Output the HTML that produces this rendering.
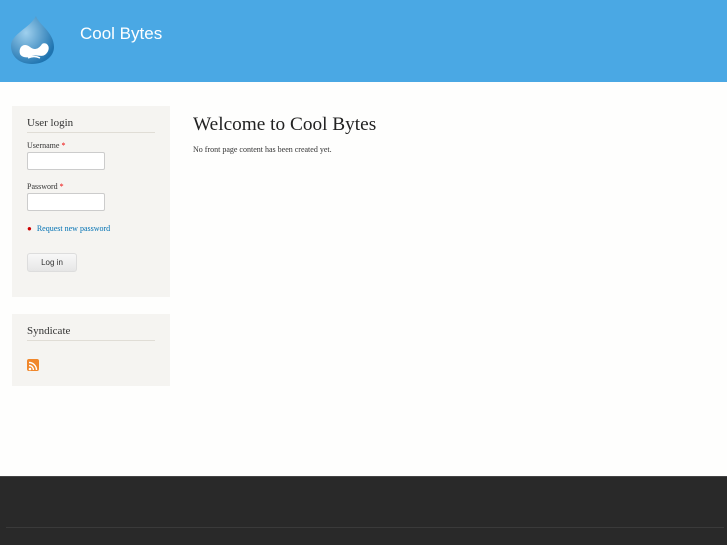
<!DOCTYPE html>
<html><head><meta charset="utf-8"><style>
*{margin:0;padding:0;box-sizing:border-box}
body{width:727px;height:545px;overflow:hidden;background:#fefefd;font-family:"Liberation Serif",serif;position:relative}
.hdr{position:absolute;left:0;top:0;width:727px;height:82px;background:#4aa8e4}
.site{position:absolute;left:80px;top:24px;font-family:"Liberation Sans",sans-serif;font-size:17px;color:#fff}
.blk{position:absolute;left:12px;width:158px;background:#f5f4f1;padding:0 15px}
.blk h2{font-weight:normal;font-size:11px;color:#333;padding:11px 0 3px;border-bottom:1px solid #e0ddd6}
label{display:block;font-size:8px;color:#333;margin-top:7px}
label b{color:#e00;font-weight:normal}
.in{width:78px;height:18px;border:1px solid #ccc;background:#fff;margin-top:2px;border-radius:2px}
a{color:#0071b3;text-decoration:none}
.btn{width:50px;height:19px;border:1px solid #ddd;border-radius:3px;background:linear-gradient(#f8f8f8,#e6e6e6);font-family:"Liberation Sans",sans-serif;font-size:8px;text-align:center;line-height:17px;color:#333}
.ftr{position:absolute;left:0;top:476px;width:727px;height:69px;background:#292929;border-top:1px solid #444}
.ln{position:absolute;left:6px;top:50px;width:718px;height:1px;background:#3a3a3a}
</style></head><body>
<div class="hdr">
<svg style="position:absolute;left:10px;top:14px" width="46" height="50" viewBox="0 0 46 50">
<defs><radialGradient id="g" cx="35%" cy="35%" r="70%"><stop offset="0" stop-color="#9fd0ee"/><stop offset="1" stop-color="#1f74b0"/></radialGradient></defs>
<path d="M26 2 C28 10 44 18 44 33 C44 43 34 50 22 50 C10 50 1 43 1 32 C1 20 20 14 26 2Z" fill="url(#g)"/>
<path d="M10 40 C8 33 14 28 20 33 C24 36 28 36 32 30 C37 27 42 34 36 40 C32 44 27 40 22 42 C18 44 12 44 10 40Z" fill="#fff"/>
<path d="M18 44 Q24 41 30 44" stroke="#fff" stroke-width="1.5" fill="none"/>
</svg>
<div class="site">Cool Bytes</div>
</div>
<div class="blk" style="top:106px;height:191px">
<h2>User login</h2>
<label style="margin-top:8px">Username <b>*</b></label><div class="in"></div>
<label style="margin-top:12px">Password <b>*</b></label><div class="in"></div>
<div style="font-size:8px;margin-top:13px"><span style="color:#c00;margin-right:5px;font-size:8px">●</span><a>Request new password</a></div>
<div class="btn" style="margin-top:20px">Log in</div>
</div>
<div class="blk" style="top:314px;height:72px">
<h2>Syndicate</h2>
<div style="margin-top:18px;width:12px;height:12px;background:#f0872b;border-radius:2px;position:relative">
<svg width="12" height="12" viewBox="0 0 12 12"><circle cx="3" cy="9" r="1.3" fill="#fff"/><path d="M2 5.5a4.5 4.5 0 0 1 4.5 4.5M2 2.5a7.5 7.5 0 0 1 7.5 7.5" stroke="#fff" stroke-width="1.4" fill="none"/></svg>
</div>
</div>
<div style="position:absolute;left:193px;top:114px;font-size:19.3px;color:#222">Welcome to Cool Bytes</div>
<div style="position:absolute;left:193px;top:145px;font-size:8px;color:#333">No front page content has been created yet.</div>
<div class="ftr"><div class="ln"></div></div>
</body></html>
